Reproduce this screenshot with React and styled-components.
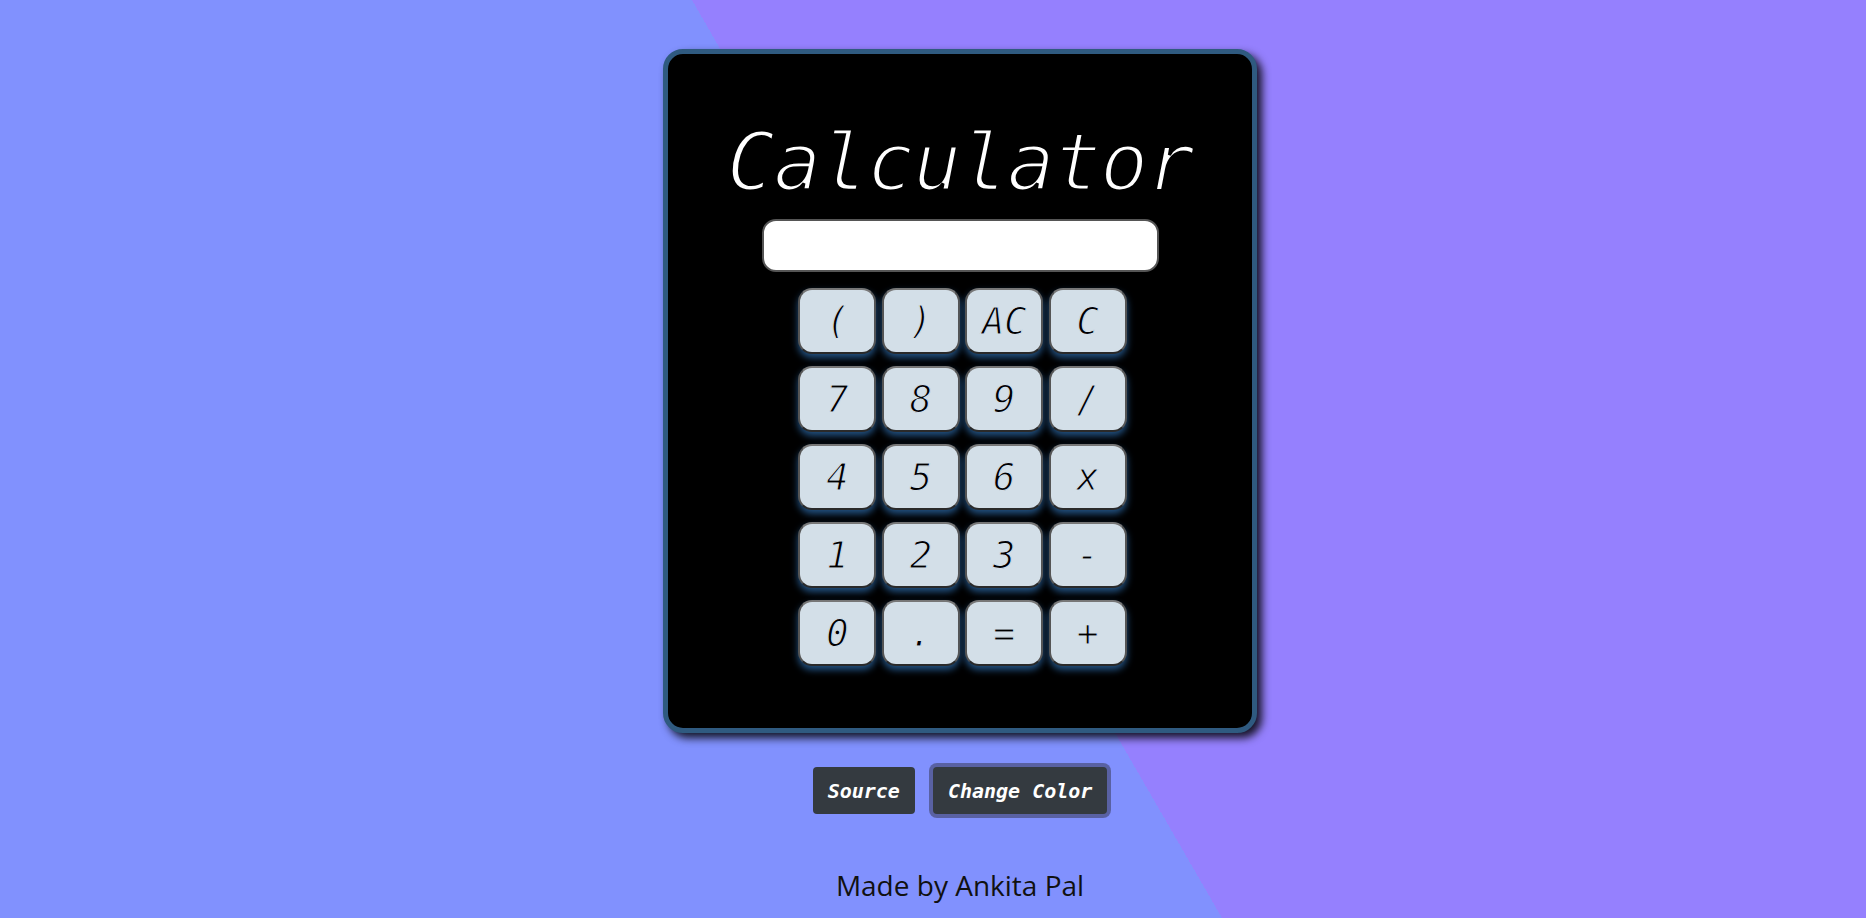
import React, { useState } from "react";
import styled, { createGlobalStyle } from "styled-components";

const GlobalStyle = createGlobalStyle`
  html, body {
    margin: 0;
    min-height: 100vh;
  }
  body {
    background: linear-gradient(60deg, #8191fe 51%, #9580fe 51%);
    background-attachment: fixed;
    font-family: "Open Sans", "Noto Sans", sans-serif;
  }
`;

const Page = styled.div`
  display: flex;
  flex-direction: column;
  align-items: center;
  padding: 49px 0 0 54px;
  min-height: 100vh;
  box-sizing: border-box;
`;

const Card = styled.div`
  width: 594px;
  height: 684px;
  box-sizing: border-box;
  background: #000;
  border: 5px solid #2f5a80;
  border-radius: 20px;
  box-shadow: 5px 5px 8px rgba(0, 0, 0, 0.85);
  display: flex;
  flex-direction: column;
  align-items: center;
`;

const Title = styled.h1`
  margin: 69px 0 0;
  font-family: "DejaVu Sans Mono", "Liberation Mono", monospace;
  font-style: italic;
  font-weight: normal;
  font-size: 80px;
  line-height: 1;
  letter-spacing: -1.5px;
  color: #fff;
  -webkit-text-stroke: 3px #000;
`;

const Display = styled.input`
  margin-top: 16px;
  width: 397px;
  height: 53px;
  box-sizing: border-box;
  border: 2px solid #555;
  border-radius: 14px;
  background: #fff;
  outline: none;
  padding: 0 14px;
  font-family: "DejaVu Sans Mono", monospace;
  font-size: 26px;
  text-align: right;
`;

const Keys = styled.div`
  margin: 16px 0 0 5px;
  display: grid;
  grid-template-columns: repeat(4, 78px);
  grid-auto-rows: 66px;
  column-gap: 5.4px;
  row-gap: 12px;
`;

const Key = styled.button`
  box-sizing: border-box;
  border: 2px solid;
  border-color: #777 #555 #2a2a2a #555;
  border-radius: 14px;
  background: #d3dfe8;
  box-shadow: 0 4px 7px rgba(40, 95, 150, 0.85);
  font-family: "DejaVu Sans Mono", "Liberation Mono", monospace;
  font-style: italic;
  font-size: 37px;
  color: #000;
  -webkit-text-stroke: 1.1px #d3dfe8;
  padding: 0;
  cursor: pointer;
`;

const Actions = styled.div`
  margin-top: 34px;
  display: flex;
  gap: 18px;
`;

const ActionButton = styled.button`
  height: 47px;
  padding: 0 15px;
  border: none;
  border-radius: 4px;
  background: #343a40;
  color: #fff;
  font-family: "DejaVu Sans Mono", "Liberation Mono", monospace;
  font-style: italic;
  font-weight: bold;
  font-size: 20px;
  box-shadow: ${(p) => (p.$focused ? "0 0 0 4px rgba(82, 88, 147, 0.85)" : "none")};
  cursor: pointer;
`;

const Credit = styled.p`
  margin: 55px 0 0;
  font-family: "Open Sans", "Noto Sans", sans-serif;
  font-size: 28px;
  line-height: 1.2;
  color: #111;
`;

const KEYS = ["(", ")", "AC", "C", "7", "8", "9", "/", "4", "5", "6", "x", "1", "2", "3", "-", "0", ".", "=", "+"];

export default function App() {
  const [value, setValue] = useState("");

  const press = (k) => {
    if (k === "AC") return setValue("");
    if (k === "C") return setValue((v) => v.slice(0, -1));
    if (k === "=") {
      try {
        // eslint-disable-next-line no-new-func
        const r = Function(`return (${value.replace(/x/g, "*")})`)();
        setValue(String(r));
      } catch (e) {
        setValue("Error");
      }
      return;
    }
    setValue((v) => v + k);
  };

  return (
    <>
      <GlobalStyle />
      <Page>
        <Card>
          <Title>Calculator</Title>
          <Display value={value} readOnly />
          <Keys>
            {KEYS.map((k) => (
              <Key key={k} onClick={() => press(k)}>
                {k}
              </Key>
            ))}
          </Keys>
        </Card>
        <Actions>
          <ActionButton>Source</ActionButton>
          <ActionButton $focused>Change Color</ActionButton>
        </Actions>
        <Credit>Made by Ankita Pal</Credit>
      </Page>
    </>
  );
}
